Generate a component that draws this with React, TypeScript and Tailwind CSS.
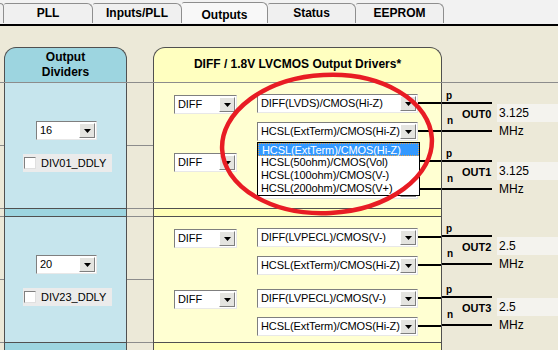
import React from "react";

const tabs = [
  { label: "PLL", cls: "w-[89px] h-[20px] pt-[2px]" },
  { label: "Inputs/PLL", cls: "w-[89px] h-[20px] pt-[2px]" },
  { label: "Outputs", cls: "w-[86px] h-[21px] pt-[5px] bg-[#f8f8f8]" },
  { label: "Status", cls: "w-[88px] h-[20px] pt-[2px]" },
  { label: "EEPROM", cls: "w-[88px] h-[20px] pt-[2px]" },
];

const listItems = [
  "HCSL(ExtTerm)/CMOS(Hi-Z)",
  "HCSL(50ohm)/CMOS(Vol)",
  "HCSL(100ohm)/CMOS(V-)",
  "HCSL(200ohm)/CMOS(V+)",
];

function Arrow() {
  return (
    <div className="flex w-[16px] shrink-0 items-center justify-center border border-t-white border-l-white border-b-[#7f7f7f] border-r-[#7f7f7f] bg-[#e4e4e0]">
      <svg width="7" height="4" viewBox="0 0 7 4">
        <path d="M0 0h7L3.5 4z" fill="#000" />
      </svg>
    </div>
  );
}

function Combo({ value, className }: { value: string; className: string }) {
  return (
    <div
      className={`flex h-[19px] shrink-0 border border-t-[#7f7f7f] border-l-[#7f7f7f] border-b-[#e8e8e8] border-r-[#e8e8e8] bg-white p-px ${className}`}
    >
      <span className="min-w-0 flex-1 whitespace-nowrap pl-[2px] text-[11px] leading-[15px] tracking-[-0.1px]">
        {value}
      </span>
      <Arrow />
    </div>
  );
}

// one DIFF selector + the p / n driver selectors with their wires
function DriverBlock({ p, n, className }: { p: string; n: string; className: string }) {
  return (
    <div className={`flex ${className}`}>
      <Combo value="DIFF" className="ml-[20px] mt-px w-[63px]" />
      <div className="ml-[20px] flex flex-1 flex-col gap-[9px]">
        <div className="flex items-start">
          <Combo value={p} className="w-[161px]" />
          <div className="mt-[8px] h-[2px] flex-1 bg-black" />
        </div>
        <div className="flex items-start">
          <Combo value={n} className="w-[161px]" />
          <div className="mt-[8px] h-[2px] flex-1 bg-black" />
        </div>
      </div>
    </div>
  );
}

function OutBlock({ name, freq, className }: { name: string; freq: string; className: string }) {
  return (
    <div className={`flex h-[51px] ${className}`}>
      <div className="flex w-[50px] flex-col">
        <span className="h-[12px] pl-[4px] text-[10px] font-bold leading-[12px]">p</span>
        <div className="h-[2px] bg-black" />
        <div className="flex h-[26px]">
          <span className="w-[20px] pl-[5px] pt-[12px] text-[10px] font-bold leading-[10px]">n</span>
          <span className="pt-[4px] text-[11px] font-bold leading-[12px]">{name}</span>
        </div>
        <div className="h-[2px] bg-black" />
      </div>
      <div className="flex flex-1 flex-col pl-[5px] pt-[14px]">
        <span className="h-[18px] bg-[#f4f3ee] pl-[2px] text-[12px] leading-[18px]">{freq}</span>
        <span className="mt-[2px] pl-[2px] text-[12px] leading-[14px]">MHz</span>
      </div>
    </div>
  );
}

function Divider({ value, label }: { value: string; label: string }) {
  return (
    <div className="flex flex-col">
      <Combo value={value} className="ml-[31px] mt-[38px] w-[61px]" />
      <div className="ml-[18px] mt-[14px] flex h-[18px] w-[89px] items-center bg-[#ebebeb]">
        <div className="ml-px h-[12px] w-[12px] border border-t-[#808080] border-l-[#808080] border-b-[#e0e0e0] border-r-[#e0e0e0] bg-white" />
        <span className="ml-[5px] text-[11px] leading-[12px]">{label}</span>
      </div>
    </div>
  );
}

function BeigeCell({ className }: { className: string }) {
  return (
    <div className={`flex flex-col border-[#8c8c8c] ${className}`}>
      <div className="h-[63px] border-b border-[#8c8c8c]" />
    </div>
  );
}

function SepRow() {
  return (
    <div className="flex h-[7px] shrink-0">
      <div className="w-[4px]" />
      <div className="w-[123px] border-x border-[#505050] bg-[#9dd5e0]" />
      <div className="w-[26px]" />
      <div className="w-[289px] border-x border-[#505050] bg-[#ffffb8]" />
      <div className="flex-1" />
    </div>
  );
}

export default function App() {
  return (
    <div className="relative flex h-[350px] w-[558px] flex-col overflow-hidden bg-[#ece9d8] font-['Liberation_Sans',Arial,sans-serif] text-black">
      {/* tab strip */}
      <div className="flex h-[26px] shrink-0 items-end border-b-2 border-black bg-[#f2f2f2] pb-px">
        <div className="h-[20px] w-[4px] rounded-tr-[4px] border-r border-t border-[#8e8e8e] bg-[#f0f0f0]" />
        {tabs.map((t) => (
          <div
            key={t.label}
            className={`rounded-tr-[6px] rounded-tl-[2px] border-r border-t border-[#8e8e8e] bg-[#f0f0f0] text-center text-[12px] font-bold leading-[14px] ${t.cls}`}
          >
            {t.label}
          </div>
        ))}
      </div>

      <div className="h-[21px] shrink-0" />

      {/* panel headers */}
      <div className="flex h-[36px] shrink-0 border-b border-[#8c8c8c]">
        <div className="w-[4px]" />
        <div className="flex w-[123px] flex-col items-center justify-center rounded-t-[12px] border-x border-t border-[#505050] bg-[#9dd5e0] text-[12px] font-bold leading-[15px]">
          <span>Output</span>
          <span>Dividers</span>
        </div>
        <div className="w-[26px]" />
        <div className="flex w-[289px] items-center justify-center rounded-t-[12px] border-x border-t border-[#505050] bg-[#ffffc0] pb-[3px] text-[12px] font-bold">
          DIFF / 1.8V LVCMOS Output Drivers*
        </div>
        <div className="flex-1" />
      </div>

      {/* group OUT0 / OUT1 */}
      <div className="flex h-[126px] shrink-0">
        <BeigeCell className="w-[4px] border-b" />
        <div className="w-[123px] border-x border-b border-[#505050] bg-[#c6e5ed]">
          <Divider value="16" label="DIV01_DDLY" />
        </div>
        <BeigeCell className="w-[26px] border-b" />
        <div className="flex w-[289px] flex-col border-x border-b border-[#505050] bg-[#ffffd2] pt-[11px]">
          <DriverBlock p="DIFF(LVDS)/CMOS(Hi-Z)" n="HCSL(ExtTerm)/CMOS(Hi-Z)" className="" />
          {/* this block sits under the open list, so its texts are hidden */}
          <DriverBlock p="" n="" className="mt-[11px]" />
        </div>
        <div className="flex flex-1 flex-col pt-[7px]">
          <OutBlock name="OUT0" freq="3.125" className="" />
          <OutBlock name="OUT1" freq="3.125" className="mt-[7px]" />
        </div>
      </div>

      <SepRow />

      {/* group OUT2 / OUT3 */}
      <div className="flex h-[127px] shrink-0">
        <BeigeCell className="w-[4px] border-y" />
        <div className="w-[123px] border border-[#505050] bg-[#c6e5ed]">
          <Divider value="20" label="DIV23_DDLY" />
        </div>
        <BeigeCell className="w-[26px] border-y" />
        <div className="flex w-[289px] flex-col border border-[#505050] bg-[#ffffd2] pt-[11px]">
          <DriverBlock p="DIFF(LVPECL)/CMOS(V-)" n="HCSL(ExtTerm)/CMOS(Hi-Z)" className="" />
          <DriverBlock p="DIFF(LVPECL)/CMOS(V-)" n="HCSL(ExtTerm)/CMOS(Hi-Z)" className="mt-[14px]" />
        </div>
        <div className="flex flex-1 flex-col pt-[7px]">
          <OutBlock name="OUT2" freq="2.5" className="" />
          <OutBlock name="OUT3" freq="2.5" className="mt-[10px]" />
        </div>
      </div>

      <SepRow />

      {/* open dropdown list */}
      <div className="absolute left-[257px] top-[142px] w-[163px] border border-black bg-white">
        {listItems.map((item, i) => (
          <div
            key={item}
            className={`h-[13px] whitespace-nowrap pl-[3px] text-[11px] leading-[12px] tracking-[-0.1px] ${
              i === 0 ? "border border-dotted border-[#e0a050] bg-[#3399ff] pl-[2px] leading-[11px] text-white" : ""
            }`}
          >
            {item}
          </div>
        ))}
      </div>

      {/* red annotation ring */}
      <svg className="pointer-events-none absolute left-0 top-0" width="558" height="350" viewBox="0 0 558 350">
        <ellipse cx="327" cy="144" rx="105" ry="69" transform="rotate(-3 327 144)" fill="none" stroke="#e81c24" strokeWidth="4.5" />
      </svg>
    </div>
  );
}
